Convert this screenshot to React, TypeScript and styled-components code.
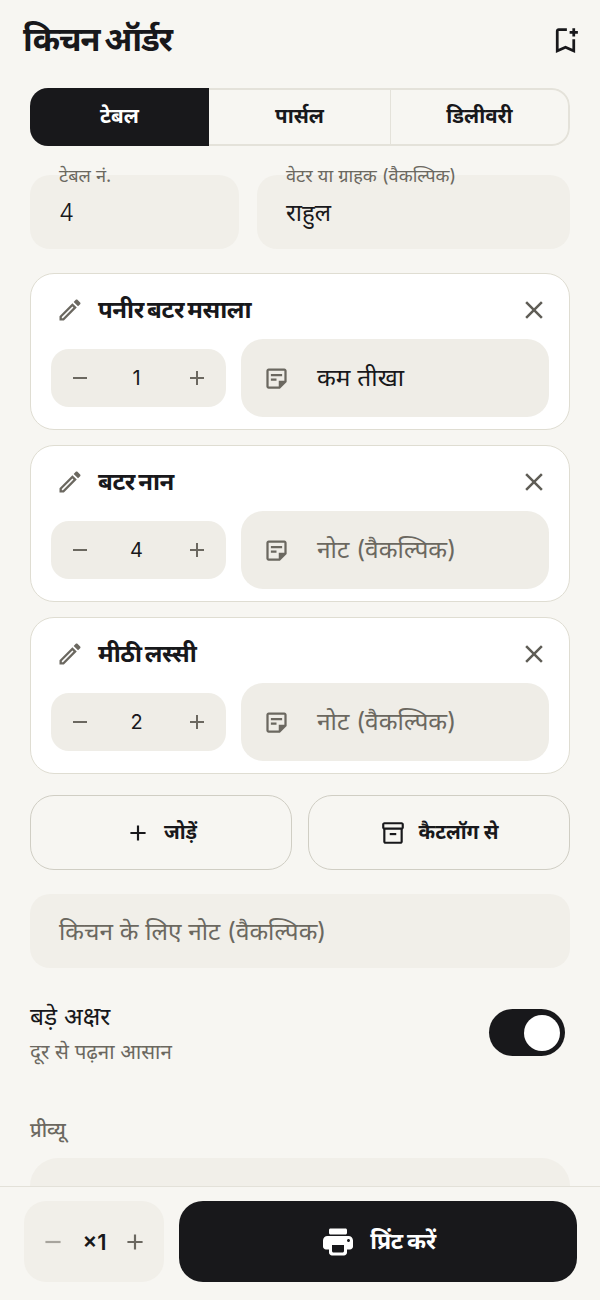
import React from "react";
import styled, { createGlobalStyle } from "styled-components";
import {
  MdAdd,
  MdClose,
  MdOutlineBookmarkAdd,
  MdOutlineEdit,
  MdOutlineInventory2,
  MdOutlineStickyNote2,
  MdRemove,
} from "react-icons/md";

const Global = createGlobalStyle`
  html, body { margin: 0; padding: 0; background: #f7f6f2; }
  body { font-family: Inter, "Noto Sans", "Noto Sans Devanagari", sans-serif; color: #18181b; }
  * { box-sizing: border-box; }
`;

const Page = styled.div`
  width: 600px;
  height: 1300px;
  display: flex;
  flex-direction: column;
  background: #f7f6f2;
  overflow: hidden;
`;

const Main = styled.main`
  flex: 1;
  min-height: 0;
  overflow: hidden;
  padding: 0 30px;
`;

const Header = styled.header`
  height: 88px;
  margin: 0 -12px 0 -7px;
  display: flex;
  align-items: flex-start;
  justify-content: space-between;
  padding-top: 19px;
`;

const Title = styled.h1`
  margin: 0;
  font-size: 33px;
  line-height: 40px;
  font-weight: 700;
  letter-spacing: -1.3px;
  word-spacing: -1.5px;
`;

const HeaderIcon = styled(MdOutlineBookmarkAdd)`
  font-size: 33px;
  margin-top: 5px;
`;

const Tabs = styled.div`
  display: grid;
  grid-template-columns: 179px 181px 1fr;
  height: 58px;
  border-radius: 18px;
  overflow: hidden;
`;

const Tab = styled.div<{ $active?: boolean }>`
  display: flex;
  align-items: center;
  justify-content: center;
  padding-bottom: 4px;
  font-size: 20.5px;
  font-weight: 700;
  background: ${(p) => (p.$active ? "#18181b" : "transparent")};
  color: ${(p) => (p.$active ? "#ffffff" : "#18181b")};
  border: ${(p) => (p.$active ? "none" : "2px solid #e4e2da")};
  border-right: none;
  &:first-child + div {
    border-left: none;
  }
  &:last-child {
    border-left-width: 1.5px;
    border-right: 2px solid #e4e2da;
    border-radius: 0 18px 18px 0;
  }
`;

const Fields = styled.div`
  display: grid;
  grid-template-columns: 209px 1fr;
  gap: 18px;
  margin-top: 29px;
`;

const Field = styled.div`
  position: relative;
  height: 74px;
  background: #f1efe9;
  border-radius: 20px;
  padding: 20px 29px 0;
  font-size: 24px;
  line-height: 36px;
`;

const NumberValue = styled.span`
  font-weight: 300;
`;

const FloatLabel = styled.span`
  position: absolute;
  left: 29px;
  top: -12px;
  font-size: 18.2px;
  line-height: 24px;
  color: #6b6860;
  white-space: nowrap;
`;

const Cards = styled.div`
  display: flex;
  flex-direction: column;
  gap: 15px;
  margin-top: 24px;
`;

const Card = styled.section`
  height: 157px;
  background: #fff;
  border: 1.5px solid #dfddd2;
  border-radius: 24px;
  padding: 11px 20px 12px;
`;

const CardTop = styled.div`
  height: 50px;
  margin-bottom: 4px;
  display: flex;
  align-items: center;
  gap: 14px;
  padding-left: 5px;
`;

const PencilIcon = styled(MdOutlineEdit)`
  font-size: 28px;
  color: #6b6860;
  flex: none;
`;

const ItemName = styled.div`
  flex: 1;
  font-size: 24px;
  line-height: 30px;
  font-weight: 700;
  letter-spacing: -0.45px;
  word-spacing: -2px;
`;

const CloseIcon = styled(MdClose)`
  font-size: 30px;
  color: #5f5d56;
  flex: none;
`;

const CardBottom = styled.div`
  display: flex;
  align-items: center;
  gap: 15px;
`;

const Stepper = styled.div`
  width: 175px;
  height: 58px;
  flex: none;
  background: #efede7;
  border-radius: 18px;
  display: grid;
  grid-template-columns: 1fr 1fr 1fr;
  align-items: center;
  justify-items: center;
  font-size: 20px;
  color: #6b6860;
`;

const Qty = styled.span`
  color: #18181b;
  padding-right: 4px;
`;

const NoteBox = styled.div`
  flex: 1;
  height: 78px;
  background: #efede7;
  border-radius: 22px;
  display: flex;
  align-items: center;
  padding-left: 21.5px;
  gap: 27.5px;
`;

const NoteIcon = styled(MdOutlineStickyNote2)`
  font-size: 27px;
  color: #6b6860;
  flex: none;
`;

const NoteText = styled.span<{ $placeholder?: boolean }>`
  font-size: 24.5px;
  padding-bottom: 4px;
  color: ${(p) => (p.$placeholder ? "#6b6860" : "#18181b")};
`;

const Actions = styled.div`
  display: grid;
  grid-template-columns: 1fr 1fr;
  gap: 16px;
  margin-top: 21px;
`;

const ActionButton = styled.div`
  height: 75px;
  border: 1.5px solid #d0cec4;
  border-radius: 24px;
  display: flex;
  align-items: center;
  justify-content: center;
  gap: 13px;
  font-size: 20px;
  font-weight: 700;
`;

const ActionLabel = styled.span`
  margin-bottom: 3px;
`;

const KitchenNote = styled.div`
  height: 74px;
  margin-top: 24px;
  background: #f1efe9;
  border-radius: 20px;
  display: flex;
  align-items: center;
  padding-left: 29px;
  padding-bottom: 2px;
  font-size: 24.3px;
  color: #6b6860;
`;

const ToggleRow = styled.div`
  display: flex;
  align-items: flex-start;
  justify-content: space-between;
  margin-top: 30px;
  padding-right: 5px;
`;

const ToggleTitle = styled.div`
  font-size: 24.5px;
  line-height: 36px;
`;

const ToggleSub = styled.div`
  font-size: 20.5px;
  line-height: 36px;
  color: #6b6860;
`;

const Toggle = styled.div`
  width: 76px;
  height: 47px;
  margin-top: 11px;
  background: #18181b;
  border-radius: 24px;
  display: flex;
  align-items: center;
  justify-content: flex-end;
  padding-right: 5px;
`;

const Knob = styled.div`
  width: 36px;
  height: 36px;
  border-radius: 50%;
  background: #fff;
`;

const PreviewLabel = styled.div`
  margin-top: 45px;
  font-size: 20px;
  font-weight: 500;
  line-height: 30px;
  color: #6b6860;
`;

const PreviewBox = styled.div`
  height: 200px;
  margin-top: 13px;
  background: #f1efe9;
  border-radius: 28px;
`;

const Footer = styled.footer`
  height: 114px;
  flex: none;
  border-top: 1.5px solid #e3e1d9;
  background: #f7f6f2;
  padding: 14px 23px 0 24px;
  display: flex;
  gap: 15px;
`;

const CopyStepper = styled.div`
  width: 140px;
  height: 81px;
  flex: none;
  background: #f1efe9;
  border-radius: 22px;
  display: flex;
  align-items: center;
  justify-content: space-between;
  padding: 0 16px;
  font-size: 22px;
  font-weight: 600;
  color: #6b6860;
`;

const CopyCount = styled.span`
  color: #18181b;
  padding-left: 1px;
`;

const DimIcon = styled.span`
  display: flex;
  opacity: 0.55;
`;

const PrintButton = styled.div`
  flex: 1;
  height: 81px;
  background: #18181b;
  color: #fff;
  border-radius: 24px;
  display: flex;
  align-items: center;
  justify-content: center;
  gap: 14px;
  font-size: 23px;
  font-weight: 700;
`;

const PrintLabel = styled.span`
  margin-bottom: 4px;
  letter-spacing: -0.3px;
  word-spacing: -1px;
`;

const PrintIcon = () => (
  <svg width="36" height="36" viewBox="0 0 24 24" fill="currentColor" aria-hidden="true">
    <path d="M19 8H5c-1.66 0-3 1.34-3 3v4c0 1.1.9 2 2 2h2v2c0 1.1.9 2 2 2h8c1.1 0 2-.9 2-2v-2h2c1.1 0 2-.9 2-2v-4c0-1.66-1.34-3-3-3zm-4 11H9c-.55 0-1-.45-1-1v-4h8v4c0 .55-.45 1-1 1zm4-7c-.55 0-1-.45-1-1s.45-1 1-1 1 .45 1 1-.45 1-1 1zm-2-9H7c-.55 0-1 .45-1 1v2c0 .55.45 1 1 1h10c.55 0 1-.45 1-1V4c0-.55-.45-1-1-1z" />
  </svg>
);

const items = [
  { name: "पनीर बटर मसाला", qty: 1, note: "कम तीखा" },
  { name: "बटर नान", qty: 4, note: "" },
  { name: "मीठी लस्सी", qty: 2, note: "" },
];

export default function App() {
  return (
    <Page>
      <Global />
      <Main>
        <Header>
          <Title>किचन ऑर्डर</Title>
          <HeaderIcon />
        </Header>
        <Tabs>
          <Tab $active>टेबल</Tab>
          <Tab>पार्सल</Tab>
          <Tab>डिलीवरी</Tab>
        </Tabs>
        <Fields>
          <Field>
            <FloatLabel>टेबल नं.</FloatLabel>
            <NumberValue>4</NumberValue>
          </Field>
          <Field>
            <FloatLabel>वेटर या ग्राहक (वैकल्पिक)</FloatLabel>राहुल
          </Field>
        </Fields>
        <Cards>
          {items.map((item) => (
            <Card key={item.name}>
              <CardTop>
                <PencilIcon />
                <ItemName>{item.name}</ItemName>
                <CloseIcon />
              </CardTop>
              <CardBottom>
                <Stepper>
                  <MdRemove size={24} />
                  <Qty>{item.qty}</Qty>
                  <MdAdd size={24} />
                </Stepper>
                <NoteBox>
                  <NoteIcon />
                  <NoteText $placeholder={!item.note}>
                    {item.note || "नोट (वैकल्पिक)"}
                  </NoteText>
                </NoteBox>
              </CardBottom>
            </Card>
          ))}
        </Cards>
        <Actions>
          <ActionButton>
            <MdAdd size={26} />
            <ActionLabel>जोड़ें</ActionLabel>
          </ActionButton>
          <ActionButton>
            <MdOutlineInventory2 size={26} />
            <ActionLabel>कैटलॉग से</ActionLabel>
          </ActionButton>
        </Actions>
        <KitchenNote>किचन के लिए नोट (वैकल्पिक)</KitchenNote>
        <ToggleRow>
          <div>
            <ToggleTitle>बड़े अक्षर</ToggleTitle>
            <ToggleSub>दूर से पढ़ना आसान</ToggleSub>
          </div>
          <Toggle>
            <Knob />
          </Toggle>
        </ToggleRow>
        <PreviewLabel>प्रीव्यू</PreviewLabel>
        <PreviewBox />
      </Main>
      <Footer>
        <CopyStepper>
          <DimIcon>
            <MdRemove size={26} />
          </DimIcon>
          <CopyCount>×1</CopyCount>
          <MdAdd size={26} />
        </CopyStepper>
        <PrintButton>
          <PrintIcon />
          <PrintLabel>प्रिंट करें</PrintLabel>
        </PrintButton>
      </Footer>
    </Page>
  );
}
